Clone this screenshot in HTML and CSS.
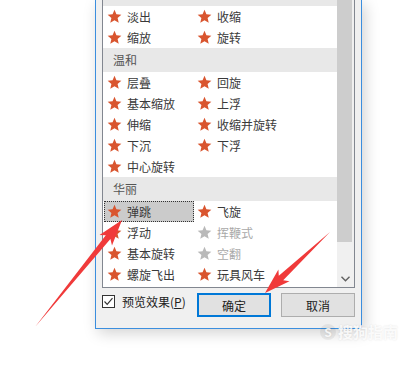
FILE: index.html
```html
<!DOCTYPE html>
<html lang="zh">
<head>
<meta charset="utf-8">
<link rel="stylesheet" href="styles.css">
</head>
<body>
<svg width="0" height="0" class="defs" aria-hidden="true">
  <defs>
    <symbol id="star" viewBox="0 0 24 24">
      <polygon points="12,1.3 15.06,8.59 22.94,9.25 16.95,14.41 18.76,22.1 12,18 5.24,22.1 7.05,14.41 1.06,9.25 8.94,8.59"/>
    </symbol>
  </defs>
</svg>
<div class="dialog">
  <div class="listbox">
    <div class="list">
      <div class="list-inner">
        <div class="group"></div>
        <div class="grid">
          <div class="item"><svg class="star"><use href="#star"/></svg><span>淡出</span></div>
          <div class="item"><svg class="star"><use href="#star"/></svg><span>收缩</span></div>
          <div class="item"><svg class="star"><use href="#star"/></svg><span>缩放</span></div>
          <div class="item"><svg class="star"><use href="#star"/></svg><span>旋转</span></div>
        </div>
        <div class="group">温和</div>
        <div class="grid">
          <div class="item"><svg class="star"><use href="#star"/></svg><span>层叠</span></div>
          <div class="item"><svg class="star"><use href="#star"/></svg><span>回旋</span></div>
          <div class="item"><svg class="star"><use href="#star"/></svg><span>基本缩放</span></div>
          <div class="item"><svg class="star"><use href="#star"/></svg><span>上浮</span></div>
          <div class="item"><svg class="star"><use href="#star"/></svg><span>伸缩</span></div>
          <div class="item"><svg class="star"><use href="#star"/></svg><span>收缩并旋转</span></div>
          <div class="item"><svg class="star"><use href="#star"/></svg><span>下沉</span></div>
          <div class="item"><svg class="star"><use href="#star"/></svg><span>下浮</span></div>
          <div class="item"><svg class="star"><use href="#star"/></svg><span>中心旋转</span></div>
          <div class="item empty"></div>
        </div>
        <div class="group">华丽</div>
        <div class="grid">
          <div class="item sel"><svg class="star"><use href="#star"/></svg><span>弹跳</span></div>
          <div class="item"><svg class="star"><use href="#star"/></svg><span>飞旋</span></div>
          <div class="item"><svg class="star"><use href="#star"/></svg><span>浮动</span></div>
          <div class="item disabled"><svg class="star"><use href="#star"/></svg><span>挥鞭式</span></div>
          <div class="item"><svg class="star"><use href="#star"/></svg><span>基本旋转</span></div>
          <div class="item disabled"><svg class="star"><use href="#star"/></svg><span>空翻</span></div>
          <div class="item"><svg class="star"><use href="#star"/></svg><span>螺旋飞出</span></div>
          <div class="item"><svg class="star"><use href="#star"/></svg><span>玩具风车</span></div>
        </div>
      </div>
    </div>
    <div class="scrollbar">
      <div class="thumb"></div>
      <div class="track"></div>
      <div class="down">
        <svg width="9" height="6" viewBox="0 0 9 6"><polyline points="0.5,0.8 4.5,4.8 8.5,0.8" fill="none" stroke="#606060" stroke-width="1.4"/></svg>
      </div>
    </div>
  </div>
  <div class="footer">
    <label class="check">
      <span class="box"><svg width="11" height="11" viewBox="0 0 11 11"><polyline points="1.5,5.5 4.2,8.3 9.5,2.2" fill="none" stroke="#333" stroke-width="1.2"/></svg></span>
      <span>预览效果(<u>P</u>)</span>
    </label>
    <div class="buttons">
      <button class="btn primary">确定</button>
      <button class="btn">取消</button>
    </div>
  </div>
</div>
<div class="watermark"><span class="wm-s">S</span>搜狗指南</div>
<svg class="arrows" width="420" height="378" viewBox="0 0 420 378">
  <polygon points="35,327 110.4,239 112,245.5 122,220 99.5,235 105.8,235.2"/>
  <polygon points="330,232 283.2,280.3 289.5,281.2 265,293 278.4,269.5 278.8,275.7"/>
</svg>
</body>
</html>
```

FILE: styles.css
```css
* { box-sizing: border-box; margin: 0; padding: 0; }
html, body { width: 420px; height: 378px; overflow: hidden; background: #fff; }
body {
  position: relative;
  font-family: "Noto Sans CJK SC", "Microsoft YaHei", sans-serif;
  font-size: 12px;
  color: #3a3a3a;
}
.defs { position: absolute; }
.dialog {
  margin-left: 95px;
  width: 267px;
  height: 329px;
  background: #f0f0f0;
  border: 1px solid #3b8ede;
  border-top: none;
  box-shadow: 3px 4px 14px rgba(0, 0, 0, 0.18);
  padding: 0 6px;
  display: flex;
  flex-direction: column;
}
.listbox {
  height: 288px;
  border: 1px solid #828790;
  border-top: none;
  background: #fff;
  display: flex;
}
.list { flex: 1; overflow: hidden; }
.list-inner { margin-top: -18px; }
.group {
  height: 24px;
  line-height: 24px;
  background: #e8e8e8;
  color: #555;
  padding-left: 10px;
}
.grid {
  display: grid;
  grid-template-columns: 90px 90px;
  padding-left: 1px;
}
.item {
  height: 21px;
  line-height: 21px;
  display: flex;
  align-items: center;
  gap: 5px;
  padding-left: 3px;
  white-space: nowrap;
}
.star { width: 15px; height: 15px; fill: #d9552f; flex: none; }
.item.disabled { color: #a9a9a9; }
.item.disabled .star { fill: #b9b9b9; }
.item.sel {
  background: #cbcbcb;
  border: 1px dotted #333;
  padding-left: 2px;
}
.scrollbar {
  width: 17px;
  background: #f0f0f0;
  display: flex;
  flex-direction: column;
}
.thumb { height: 242px; width: 15px; background: #cdcdcd; }
.track { flex: 1; }
.down {
  height: 17px;
  display: flex;
  align-items: center;
  justify-content: center;
}
.footer {
  flex: 1;
  display: flex;
  align-items: flex-start;
  padding-top: 5px;
}
.check {
  display: flex;
  align-items: center;
  gap: 7px;
  margin-top: 2px;
  line-height: 13px;
  color: #222;
}
.box {
  width: 13px;
  height: 13px;
  border: 1px solid #333;
  background: #fff;
  display: flex;
  align-items: center;
  justify-content: center;
}
.buttons { margin-left: auto; display: flex; gap: 10px; }
.btn {
  width: 74px;
  height: 24px;
  border: 1px solid #adadad;
  background: #e1e1e1;
  font: inherit;
  color: #222;
}
.btn.primary { border: 2px solid #0078d7; }
.watermark {
  position: absolute;
  left: 320px;
  top: 321px;
  font-size: 15px;
  font-weight: bold;
  color: rgba(255, 255, 255, 0.85);
  text-shadow: 0 0 2px rgba(0, 0, 0, 0.12);
  display: flex;
  align-items: center;
  gap: 2px;
}
.wm-s {
  width: 16px;
  height: 16px;
  border-radius: 50%;
  background: rgba(0, 0, 0, 0.06);
  font-size: 12px;
  line-height: 16px;
  text-align: center;
}
.arrows {
  position: absolute;
  left: 0;
  top: 0;
  fill: #f03a3a;
  pointer-events: none;
}
```
